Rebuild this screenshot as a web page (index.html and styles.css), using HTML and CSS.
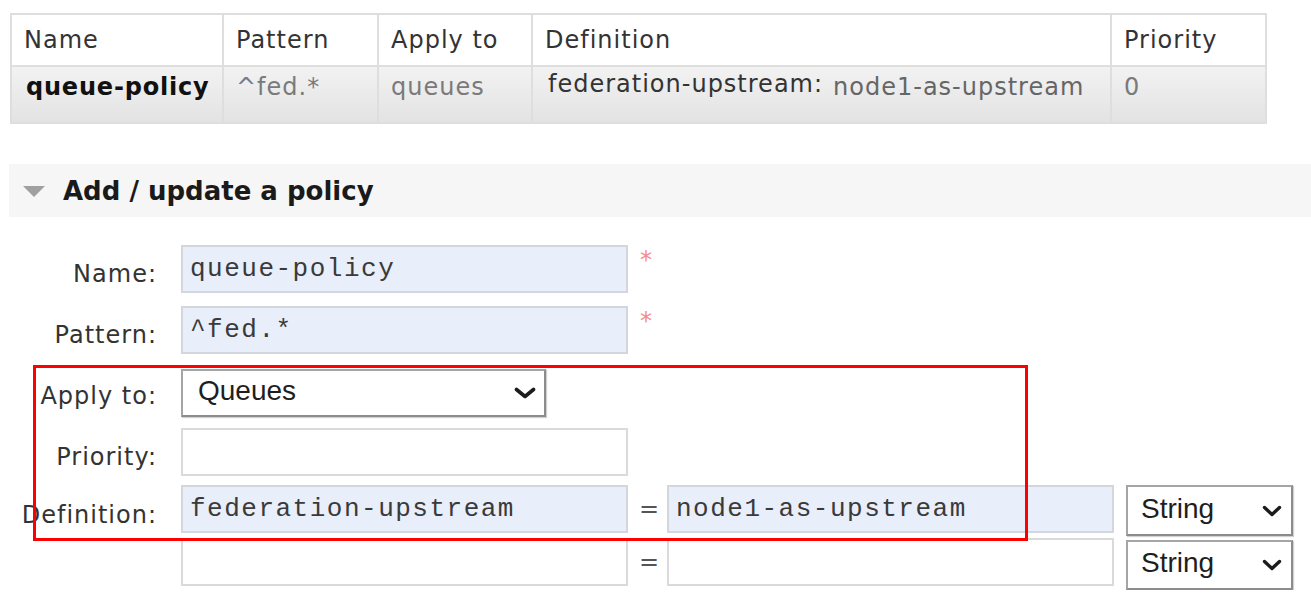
FILE: index.html
```html
<!DOCTYPE html>
<html lang="en">
<head>
<meta charset="utf-8">
<title>Policies</title>
<link rel="stylesheet" href="styles.css">
</head>
<body>
<div class="page">
  <table class="list">
    <colgroup>
      <col class="c-name"><col class="c-pattern"><col class="c-apply"><col class="c-def"><col class="c-prio">
    </colgroup>
    <thead>
      <tr><th>Name</th><th>Pattern</th><th>Apply to</th><th>Definition</th><th>Priority</th></tr>
    </thead>
    <tbody>
      <tr>
        <td class="strong">queue-policy</td>
        <td class="dim">^fed.*</td>
        <td class="dim">queues</td>
        <td>
          <div class="kv">
            <span class="k">federation-upstream:</span>
            <span class="v">node1-as-upstream</span>
          </div>
        </td>
        <td class="dim">0</td>
      </tr>
    </tbody>
  </table>

  <div class="section-head">
    <span class="tri"></span>
    <h2>Add / update a policy</h2>
  </div>

  <form class="form">
    <div class="row r-name">
      <label class="lbl">Name:</label>
      <input class="txt filled" type="text" value="queue-policy">
      <span class="req">*</span>
    </div>
    <div class="row r-pattern">
      <label class="lbl">Pattern:</label>
      <input class="txt filled" type="text" value="^fed.*">
      <span class="req">*</span>
    </div>
    <div class="row r-apply">
      <label class="lbl lbl-sel">Apply to:</label>
      <div class="sel sel-apply">
        <span>Queues</span>
        <svg class="chev" width="22" height="12" viewBox="0 0 22 12"><path d="M2.5 2.5 L11 9.5 L19.5 2.5" fill="none" stroke="#1c1c1c" stroke-width="3.6" stroke-linecap="round" stroke-linejoin="round"/></svg>
      </div>
    </div>
    <div class="row r-prio">
      <label class="lbl">Priority:</label>
      <input class="txt" type="text" value="">
    </div>
    <div class="row r-def">
      <label class="lbl">Definition:</label>
      <div class="multi">
        <div class="pair p1">
          <input class="txt filled" type="text" value="federation-upstream">
          <span class="eq">=</span>
          <input class="txt filled" type="text" value="node1-as-upstream">
          <div class="sel sel-type">
            <span>String</span>
            <svg class="chev" width="20" height="12" viewBox="0 0 20 12"><path d="M2.5 2.5 L10 9.5 L17.5 2.5" fill="none" stroke="#1c1c1c" stroke-width="3.4" stroke-linecap="round" stroke-linejoin="round"/></svg>
          </div>
        </div>
        <div class="pair p2">
          <input class="txt" type="text" value="">
          <span class="eq">=</span>
          <input class="txt" type="text" value="">
          <div class="sel sel-type">
            <span>String</span>
            <svg class="chev" width="20" height="12" viewBox="0 0 20 12"><path d="M2.5 2.5 L10 9.5 L17.5 2.5" fill="none" stroke="#1c1c1c" stroke-width="3.4" stroke-linecap="round" stroke-linejoin="round"/></svg>
          </div>
        </div>
      </div>
    </div>
    <div class="highlight"></div>
  </form>
</div>
</body>
</html>
```

FILE: styles.css
```css
* { box-sizing: border-box; }

html, body {
  margin: 0;
  background: #fff;
}

body {
  font-family: "DejaVu Sans", Verdana, sans-serif;
  font-size: 24px;
  letter-spacing: 1px;
  color: #333;
  overflow: hidden;
}

.page {
  padding: 13px 0 0 10px;
}

/* ---------- table ---------- */
.list {
  border-collapse: collapse;
  table-layout: fixed;
  width: 1255px;
}
.c-name { width: 212px; }
.c-pattern { width: 155px; }
.c-apply { width: 154px; }
.c-def { width: 579px; }
.c-prio { width: 155px; }

.list th,
.list td {
  border: 2px solid #dedede;
  text-align: left;
  font-weight: normal;
  line-height: 28px;
  white-space: nowrap;
  vertical-align: top;
}
.list th {
  background: #fff;
  color: #333;
  padding: 11px 12px 11px 12px;
  height: 52px;
}
.list td {
  background: linear-gradient(#f2f2f2, #e3e3e3);
  padding: 6px 12px 0 12px;
  height: 57px;
}
.list td.strong {
  font-weight: bold;
  color: #111;
  letter-spacing: 0.8px;
  padding-left: 14px;
}
.list td.dim { color: #7a7a7a; }

.kv {
  display: flex;
  align-items: flex-start;
  gap: 10px;
  padding-left: 3px;
}
.kv .k { color: #333; margin-top: -3px; }
.kv .v { color: #666; }

/* ---------- section header ---------- */
.section-head {
  display: flex;
  align-items: center;
  margin: 40px 0 0 -1px;
  height: 53px;
  background: #f6f6f6;
  padding-left: 14px;
}
.tri {
  width: 0;
  height: 0;
  border-left: 11px solid transparent;
  border-right: 11px solid transparent;
  border-top: 11px solid #a0a0a0;
  margin-top: 2px;
}
.section-head h2 {
  margin: 0 0 0 18px;
  font-size: 26px;
  font-weight: bold;
  letter-spacing: 0;
  color: #1a1a1a;
  line-height: 30px;
}

/* ---------- form ---------- */
.form {
  position: relative;
  padding-top: 28px;
  width: 1301px;
}
.row {
  display: flex;
  align-items: flex-start;
}
.r-pattern { margin-top: 13px; }
.r-apply { margin-top: 15px; }
.r-prio { margin-top: 11px; }
.r-def { margin-top: 9px; }

.lbl {
  width: 171px;
  flex: none;
  text-align: right;
  padding-right: 24px;
  padding-top: 15px;
  line-height: 28px;
  color: #333;
  white-space: nowrap;
}
.r-def .lbl { padding-top: 16px; }
.lbl-sel { padding-top: 13px; }

.txt {
  flex: none;
  width: 447px;
  height: 48px;
  border: 2px solid #dadada;
  background: #fff;
  margin: 0;
  padding: 0 0 0 7px;
  font-family: "Liberation Mono", "DejaVu Sans Mono", monospace;
  font-size: 26px;
  letter-spacing: 1.5px;
  color: #3a3a3a;
  outline: none;
}
.txt.filled {
  background: #e8eefa;
  border-color: #d3d6dc;
}

.req {
  color: #f58b8b;
  margin-left: 12px;
  line-height: 28px;
  padding-top: 1px;
  font-size: 24px;
}

.sel {
  flex: none;
  display: flex;
  align-items: center;
  justify-content: space-between;
  background: #fff;
  border: 2px solid #8c8c8c;
  border-top-color: #a5a5a5;
  border-left-color: #a5a5a5;
  box-shadow: 1px 1px 1px rgba(0, 0, 0, 0.18);
  font-family: "Liberation Sans", Arial, sans-serif;
  font-size: 28px;
  letter-spacing: 0;
  color: #1e1e1e;
}
.sel-apply {
  width: 365px;
  height: 48px;
  padding: 0 8px 4px 15px;
}
.sel-apply .chev { margin-top: 4px; }

.multi {
  display: flex;
  flex-direction: column;
}
.pair {
  display: flex;
  align-items: flex-start;
}
.p2 { margin-top: 2px; }
.eq {
  width: 39px;
  flex: none;
  text-align: left;
  padding-left: 11px;
  line-height: 48px;
  color: #555;
  letter-spacing: 0;
}
.sel-type {
  width: 167px;
  height: 51px;
  margin-left: 12px;
  padding: 0 9px 4px 13px;
}
.sel-type .chev { margin-top: 4px; }
.p2 .sel-type { margin-top: 2px; height: 50px; }

.highlight {
  position: absolute;
  left: 23px;
  top: 148px;
  width: 995px;
  height: 176px;
  border: 3px solid #f00;
  pointer-events: none;
}
```
